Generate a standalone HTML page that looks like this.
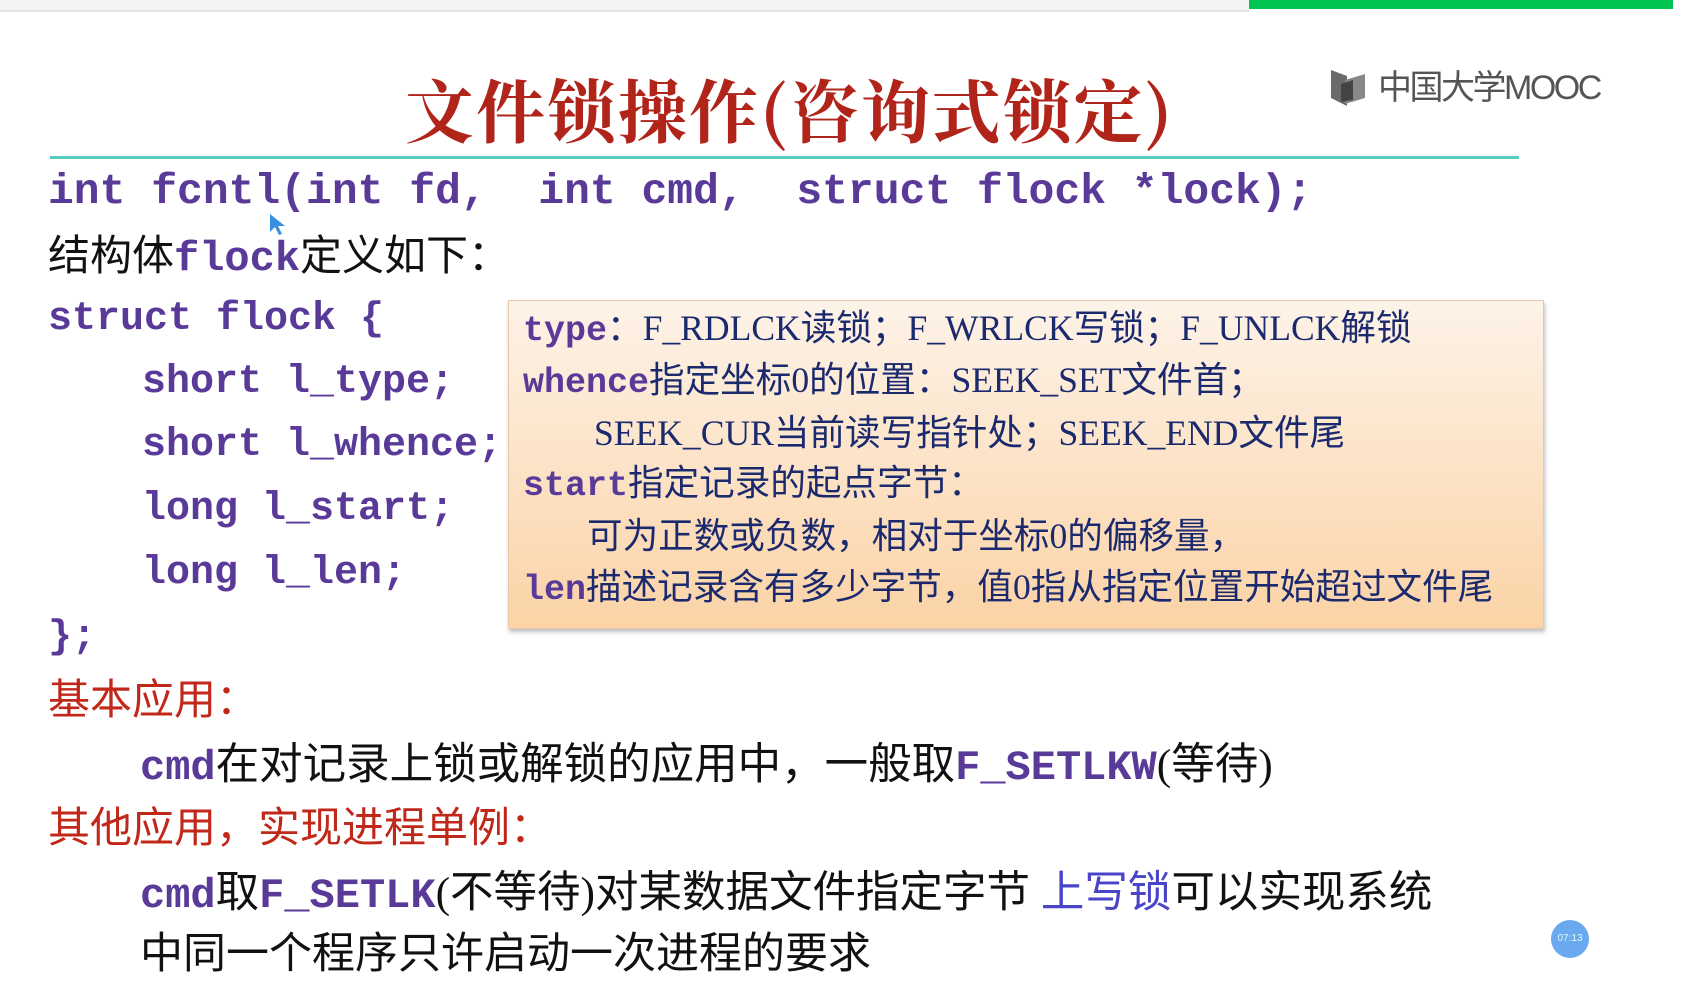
<!DOCTYPE html>
<html><head><meta charset="utf-8"><style>
body{margin:0;width:1701px;height:988px;background:#fff;position:relative;overflow:hidden;font-family:"Liberation Sans","Noto Sans CJK SC",sans-serif}
.a{position:absolute;white-space:pre}
.m{font-family:"Liberation Mono","Noto Sans CJK SC",monospace;font-weight:bold;color:#5a3a98}
.c{color:#111;font-family:"Liberation Serif","Noto Sans CJK SC",sans-serif}
.r{color:#c0281a}
.bx{font-family:"Liberation Serif","Noto Sans CJK SC",serif;color:#1b2a6e;font-size:35.6px;line-height:35px}
.bx .m{font-size:35px}
</style></head><body>
<div class="a" style="left:0;top:0;width:1249px;height:10px;background:#f4f4f4;border-bottom:2px solid #e2e2e2"></div>
<div class="a" style="left:1249px;top:0;width:424px;height:9px;background:#00c550"></div>
<svg class="a" style="left:1331px;top:70px" width="34" height="36"><path d="M0 0 L16 6 L16 36 L0 28Z" fill="#6a6a6a"/><path d="M14 10 L34 4 L34 28 L14 34Z" fill="#888"/><path d="M10 14 L22 10 L22 30 L10 32Z" fill="#444"/></svg>
<div class="a" style="left:1378px;top:66px;font-size:34px;line-height:44px;color:#555;letter-spacing:-2.5px">中国大学MOOC</div>
<div class="a" style="left:405px;top:68px;font-size:69px;line-height:80px;color:#b0241a;font-family:'Noto Serif CJK SC',serif;font-weight:bold;letter-spacing:2px">文件锁操作(咨询式锁定)</div>
<div class="a" style="left:50px;top:156px;width:1469px;height:3px;background:#58cbbb"></div>
<div class="a m" style="left:48px;top:171px;font-size:43px;line-height:42px">int fcntl(int fd,  int cmd,  struct flock *lock);</div>
<div class="a" style="left:48px;top:235px;font-size:42px;line-height:42px;color:#111">结构体<span class="m">flock</span>定义如下：</div>
<div class="a m" style="left:48px;top:299px;font-size:40px;line-height:42px">struct flock {</div>
<div class="a m" style="left:142px;top:362px;font-size:40px;line-height:42px">short l_type;</div>
<div class="a m" style="left:142px;top:425px;font-size:40px;line-height:42px">short l_whence;</div>
<div class="a m" style="left:142px;top:489px;font-size:40px;line-height:42px">long l_start;</div>
<div class="a m" style="left:142px;top:553px;font-size:40px;line-height:42px">long l_len;</div>
<div class="a m" style="left:48px;top:617px;font-size:40px;line-height:42px">};</div>
<div class="a" style="left:508px;top:300px;width:1034px;height:327px;background:linear-gradient(#fdf3e8,#fbd3a6);border:1px solid #e7c9a9;box-shadow:1px 3px 4px rgba(0,0,0,.25)"></div>
<div class="a bx" style="left:523px;top:311px"><span class="m">type</span>：F_RDLCK读锁；F_WRLCK写锁；F_UNLCK解锁</div>
<div class="a bx" style="left:523px;top:363px"><span class="m">whence</span>指定坐标0的位置：SEEK_SET文件首；</div>
<div class="a bx" style="left:594px;top:416px">SEEK_CUR当前读写指针处；SEEK_END文件尾</div>
<div class="a bx" style="left:523px;top:466px"><span class="m">start</span>指定记录的起点字节：</div>
<div class="a bx" style="left:587px;top:519px">可为正数或负数，相对于坐标0的偏移量，</div>
<div class="a bx" style="left:523px;top:570px"><span class="m">len</span>描述记录含有多少字节，值0指从指定位置开始超过文件尾</div>
<div class="a r" style="left:48px;top:679px;font-size:42px;line-height:42px">基本应用：</div>
<div class="a c" style="left:140px;top:744px;font-size:43.5px;line-height:42px"><span class="m" style="font-size:42px">cmd</span>在对记录上锁或解锁的应用中，一般取<span class="m" style="font-size:42px">F_SETLKW</span>(等待)</div>
<div class="a r" style="left:48px;top:807px;font-size:42px;line-height:42px">其他应用，实现进程单例：</div>
<div class="a c" style="left:140px;top:872px;font-size:43.5px;line-height:42px"><span class="m" style="font-size:42px">cmd</span>取<span class="m" style="font-size:42px">F_SETLK</span>(不等待)对某数据文件指定字节 <span style="color:#4a44c8">上写锁</span>可以实现系统</div>
<div class="a c" style="left:140px;top:934px;font-size:43px;line-height:42px">中同一个程序只许启动一次进程的要求</div>
<div class="a" style="left:1551px;top:920px;width:38px;height:38px;border-radius:50%;background:#6aa8f0;color:#dfe;font-size:10px;line-height:38px;text-align:center">07:13</div>
<svg class="a" style="left:268px;top:212px" width="20" height="26"><path d="M2 2 L2 20 L7 15 L11 23 L14 22 L10 14 L17 14Z" fill="#3a8ee0"/></svg>
</body></html>
